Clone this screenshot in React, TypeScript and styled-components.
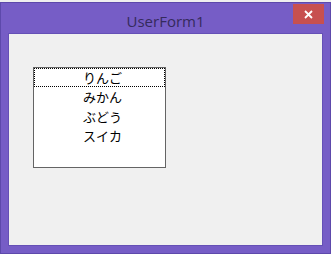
import React, { useState } from 'react'
import styled, { createGlobalStyle } from 'styled-components'

const GlobalStyle = createGlobalStyle`
  html, body {
    margin: 0;
    padding: 0;
    background: #efefef;
  }
`

const items = ['りんご', 'みかん', 'ぶどう', 'スイカ']

const App = () => {
  const [selected, setSelected] = useState(0)

  return (
    <>
      <GlobalStyle />
      <Window>
        <TitleBar>
          <span />
          <Title>UserForm1</Title>
          <CloseButton aria-label="close">
            <svg width="9" height="9" viewBox="0 0 9 9">
              <path d="M1 1 L8 8 M8 1 L1 8" stroke="#fff" strokeWidth="1.8" />
            </svg>
          </CloseButton>
        </TitleBar>
        <Client>
          <ListBox>
            {items.map((item, i) => (
              <Item key={item} $focused={i === selected} onClick={() => setSelected(i)}>
                {item}
              </Item>
            ))}
          </ListBox>
        </Client>
      </Window>
    </>
  )
}

export default App

const Window = styled.div`
  box-sizing: border-box;
  width: 331px;
  height: 252px;
  margin-top: 2px;
  background: #765dc6;
  border: 1px solid #5d49ab;
  padding: 0 7px 7px;
  display: flex;
  flex-direction: column;
`

const TitleBar = styled.div`
  height: 30px;
  display: grid;
  grid-template-columns: 1fr auto 1fr;
  align-items: start;
`

const Title = styled.div`
  margin-top: 8px;
  font-family: 'Open Sans', 'Noto Sans', sans-serif;
  font-size: 15px;
  line-height: 20px;
  color: #352a5c;
`

const CloseButton = styled.div`
  justify-self: end;
  width: 31px;
  height: 20px;
  margin-top: 1px;
  margin-right: -1px;
  background: #c75050;
  display: flex;
  align-items: center;
  justify-content: center;
`

const Client = styled.div`
  flex: 1;
  box-sizing: border-box;
  background: #f0f0f0;
  border: 1px solid #6550b6;
  padding: 33px 0 0 24px;
`

const ListBox = styled.div`
  box-sizing: border-box;
  width: 133px;
  height: 101px;
  background: #fff;
  border: 1px solid #646464;
  display: flex;
  flex-direction: column;
`

const Item = styled.div<{ $focused: boolean }>`
  box-sizing: border-box;
  height: 19.3px;
  padding-left: 6px;
  border: 1px ${(p) => (p.$focused ? 'dotted #000' : 'solid transparent')};
  font-family: 'Noto Sans CJK JP', sans-serif;
  font-size: 13px;
  line-height: 17px;
  color: #000;
  text-align: center;
  cursor: default;
`
